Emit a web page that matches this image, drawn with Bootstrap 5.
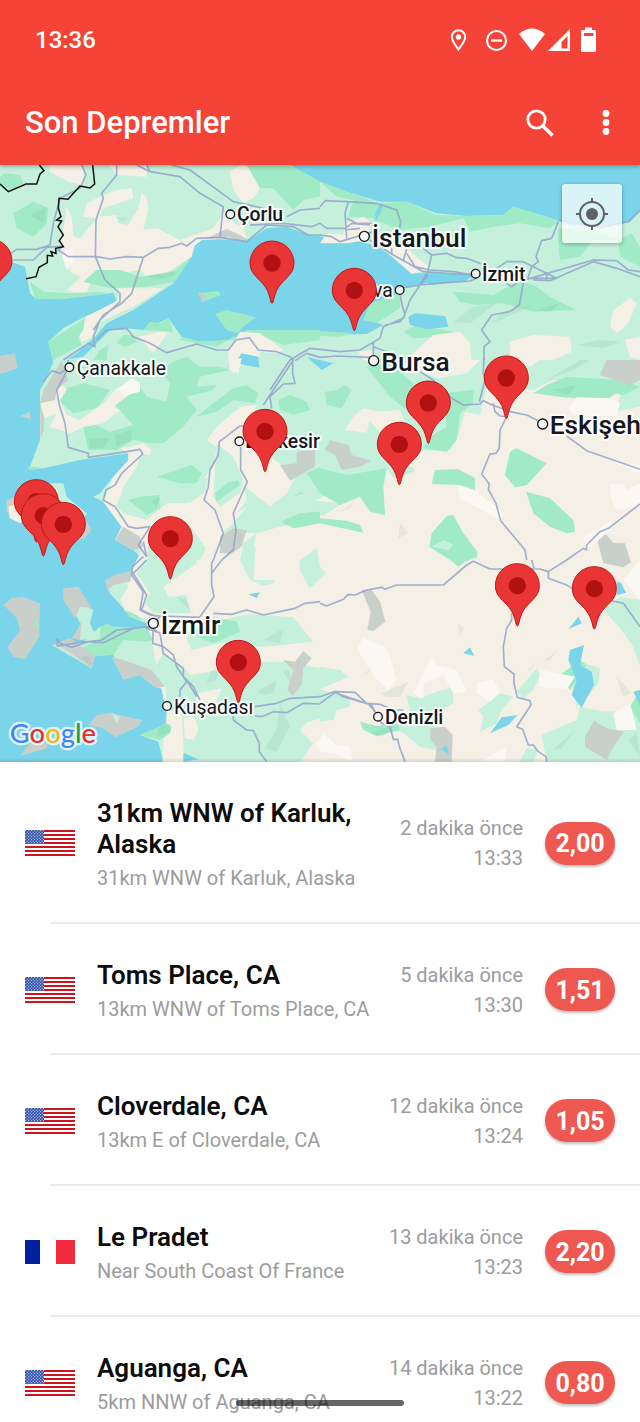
<!DOCTYPE html>
<html lang="tr">
<head>
<meta charset="utf-8">
<meta name="viewport" content="width=device-width, initial-scale=1">
<title>Son Depremler</title>
<link href="https://cdn.jsdelivr.net/npm/bootstrap@5.3.0/dist/css/bootstrap.min.css" rel="stylesheet">
<style>
  body { font-family: Roboto, "Noto Sans", sans-serif; color: #0c0c0c; }
  .app { height: 100vh; }
  .app-top { background: #f54337; color: #fff; box-shadow: 0 1px 5px rgba(0,0,0,.35); z-index: 2; }
  .status { height: 80px; padding: 0 44px 0 35px; font-size: 24px; font-weight: 500; }
  .toolbar { height: 85px; padding: 0 18px 0 25px; }
  .toolbar h1 { font-size: 31px; line-height: 36px; font-weight: 500; }
  .tools { gap: 34px; }
  .tool { width: 32px; height: 48px; border: 0; background: none; padding: 0; color: #fff; }
  .locate { top: 19px; right: 18px; width: 60px; height: 59px; border: 0; border-radius: 3px; background: rgba(255,255,255,.72); box-shadow: 0 1px 4px rgba(0,0,0,.3); padding: 0; }
  .sea { fill: #7bd5ea; } .land { fill: #c5f1dc; } .wood { fill: #a0eac5; }
  .plain { fill: #f5f0e5; } .pale { fill: #fbf8f3; } .rock { fill: #c9cfca; }
  .shade { fill: #4d8f78; fill-opacity: .1; }
  .road { fill: none; stroke: #92a3cb; stroke-width: 5; stroke-opacity: .85; stroke-linejoin: round; }
  .frontier { fill: none; stroke: #111; stroke-width: 4.5; }
  .place text { fill: #15171c; stroke: #fff; stroke-opacity: .85; stroke-width: 12; stroke-linejoin: round; paint-order: stroke; font-size: 58px; }
  .place .mid { font-weight: 500; }
  .place .big { font-weight: 500; font-size: 79px; }
  .place circle { fill: #f4f4f4; stroke: #15171c; stroke-width: 4; }
  .brand text { font-family: Lato, sans-serif; font-size: 82px; font-weight: 500; stroke: #fff; stroke-opacity: .75; stroke-width: 14; stroke-linejoin: round; paint-order: stroke; }
  .quake { padding: 0 25px; }
  .quake::after { content: ""; position: absolute; left: 50px; right: 0; bottom: 0; height: 2px; background: #ebebeb; }
  .flag { width: 50px; margin-right: 22px; }
  .info { padding: 36px 0 33px; min-width: 0; }
  .info h2 { font-size: 26px; line-height: 31px; font-weight: 600; margin: 0 0 5px; }
  .info p, .when { font-size: 20px; color: #9c9c9c; }
  .info p { line-height: 26px; margin: 0; }
  .when { line-height: 30px; margin: 0 22px 0 16px; }
  .magnitude { width: 70px; height: 43px; padding-top: 2px; border-radius: 22px; background: #ef5850; color: #fff; font-size: 25px; font-weight: 700; box-shadow: 0 2px 3px rgba(0,0,0,.25); }
  .home-bar { left: 50%; bottom: 16px; width: 168px; height: 6px; margin-left: -84px; border-radius: 3px; background: rgba(0,0,0,.6); z-index: 3; }
</style>
</head>
<body>
<div class="app d-flex flex-column overflow-hidden bg-white">
  <header class="app-top position-relative flex-shrink-0">
    <div class="status d-flex align-items-center justify-content-between">
      <span>13:36</span>
      <svg width="145" height="26" viewBox="451 26 145 26" fill="none" stroke="#fff" aria-hidden="true">
        <path d="M458.500 48.500C455 43.500 451.800 40 451.800 36a6.700 6.700 0 0 1 13.400 0C465.200 40 462 43.500 458.500 48.500Z" stroke-width="2"/>
        <circle cx="458.500" cy="36" r="2.700" fill="#fff" stroke="none"/>
        <circle cx="496.500" cy="39.500" r="9.500" stroke-width="2"/><path d="M491 39.500h11" stroke-width="2.400"/>
        <path d="M519 33Q532 22 545 33L532 50Z" fill="#fff" stroke="none"/>
        <path fill-rule="evenodd" d="M570 28V50H548ZM567.500 35L561.500 41V47.500h6Z" fill="#fff" stroke="none"/>
        <path fill-rule="evenodd" d="M585 29v-2.500h7V29h2.500q1.500 0 1.500 1.500v19q0 1.500-1.500 1.500h-12q-1.500 0-1.500-1.500v-19q0-1.500 1.500-1.500ZM584 32v3h9.500v-3Z" fill="#fff" stroke="none"/>
      </svg>
    </div>
    <div class="toolbar d-flex align-items-center">
      <h1 class="m-0 flex-grow-1">Son Depremler</h1>
      <div class="tools d-flex">
        <button class="tool" type="button" aria-label="Ara"><svg width="32" height="34" viewBox="0 0 32 34" fill="none" stroke="#fff"><circle cx="12.500" cy="13.500" r="8.700" stroke-width="2.800"/><path d="M19 20L28.500 29.500" stroke-width="3.600"/></svg></button>
        <button class="tool" type="button" aria-label="Menü"><svg width="32" height="32" viewBox="0 0 32 32" fill="#fff"><circle cx="16" cy="6.500" r="3.400"/><circle cx="16" cy="15.500" r="3.400"/><circle cx="16" cy="24.500" r="3.400"/></svg></button>
      </div>
    </div>
  </header>

  <section class="position-relative flex-shrink-0" aria-label="Harita">
    <svg class="map d-block w-100" viewBox="0 0 1920 1791">
      <defs>
        <g id="pin"><path d="M0 121C-5 121-5 96-18 75C-35 46-66 36-66 0A66 66 0 1 1 66 0C66 36 35 46 18 75C5 96 5 121 0 121Z" fill="#e93535" stroke="#c11717" stroke-width="3"/><circle r="26" fill="#b11211"/></g>
        <linearGradient id="fade" x2="0" y2="1"><stop offset="0" stop-opacity="0"/><stop offset="1" stop-opacity=".12"/></linearGradient>
      </defs>
      <rect class="sea" width="1920" height="1791"/>

      <!-- Thrace, Anatolia and the Black Sea coast -->
      <path class="land" d="M0 0H870L960 50L1040 80L1140 110L1220 110L1310 145L1400 153L1510 150L1540 125L1640 155L1710 180L1790 185L1890 170L1920 140V1791H490L475 1730L420 1710L510 1675L500 1625V1575L465 1565L420 1530L370 1540L340 1470L285 1470L275 1510L155 1440L250 1430L300 1385L440 1390L440 1375L390 1355L375 1335L330 1285L320 1245L400 1220L430 1185L400 1155L345 1125L365 1085L310 1010L280 995L300 985L340 935L385 895V865L240 885L130 910L90 905L120 825V675L140 640L190 585L250 575L300 525L330 495L380 490L430 495L505 460L545 515L600 530L700 525L730 505L840 495H960V510L1100 507L1150 480L1110 465L1195 385L1200 370L1280 355L1410 340L1440 330L1300 325L1245 325L1170 270L1130 243L1060 225L1010 233L960 213L930 210L860 185L800 190L770 210L735 230L700 215L605 225L585 240L575 275L540 305L520 355L400 435L320 475L285 515L230 565L190 590L135 650L160 590L145 530L190 490L245 460L352 410L340 383L180 403L105 400L90 385L75 305L30 290L0 270Z"/>

      <!-- Aegean inland -->
      <g transform="translate(360 945)">
        <path class="plain" d="M70 200L30 280L5 350L15 395L80 410L110 560L140 700L128 846H1560V0H700L410 160H300L180 100Z"/>
        <path class="land" d="M150 140L215 145L258 205L230 250L130 320L145 350L200 345L210 400L100 400L75 370L90 340L50 280L80 230L75 190ZM410 160L400 200L455 205L478 235L450 260L470 280L460 310L430 318L390 300L360 240L370 190ZM535 235L590 205L600 260L618 280L570 325L560 290L538 270ZM345 410L380 403L520 412L580 485L440 500L370 500L300 490L215 510L200 480L210 450ZM0 490L80 485L75 520L105 560L130 520L190 560L210 585L300 570L370 545L500 545L630 570L660 570L682 592L600 628L640 640L690 655V680L650 690L640 720L560 730L540 750L580 790L540 846H190V780L185 700L140 690L138 620L60 580L0 545Z"/>
        <path class="land" d="M410 160L430 120L560 60L660 70L630 110L560 100L480 150Z"/>
        <path class="plain" d="M230 640L305 625L290 665L225 665ZM190 715L225 710L235 750L222 780L195 775ZM130 775L190 790V846H128Z"/>
        <path class="sea" d="M190 818L235 838L190 846Z"/>
      </g>

      <g transform="translate(0 -15)">
        <path class="plain" d="M145 15H250V75L205 65L150 35ZM325 15H440V50L350 45ZM690 35L720 15H755L780 85L760 115L730 130L700 90ZM200 140L215 170L220 230L240 235L290 175L250 170L260 130L300 110L350 90L395 85L400 115L310 145L300 170L350 165L355 190L385 195L415 145L425 100L440 110L445 150L430 210L470 205L540 240L640 205L680 145L700 190L730 200L740 240L660 238L605 240L580 260L575 290L480 350L440 350L420 330L370 340L350 330L280 340L260 400L245 405L200 390L245 350L215 340L175 260L190 210ZM355 385H490L400 440L300 485L280 530L245 545L235 515L260 470L355 420ZM415 530L480 515L505 518L460 580Z"/>
        <path class="wood" d="M15 40L60 45L70 70L35 90L0 75V50ZM740 15H870L960 65V110L910 120L880 150L820 85L780 85ZM40 160L100 125L145 145L140 190L100 230L50 205ZM250 365L290 330L360 330L420 350L520 335L575 290L525 365L440 380L330 385ZM75 320L90 365L130 395L210 400L300 395L360 405L345 400L180 418L105 415ZM255 475L250 510L235 530L245 555L160 600L145 545ZM430 510L450 485L480 490L505 475L520 515ZM545 530L600 545L700 540L740 510L960 510V540L850 555L780 525L700 530L650 560L540 540ZM350 550L370 525L400 525L410 545L375 560ZM300 570L325 555L320 600H280Z"/>
        <path class="wood" d="M645 462L680 450L768 472L730 500L712 520L680 510ZM605 398L655 393L663 405L610 425Z"/>
        <path class="plain" d="M685 570L720 515L780 520L850 570L830 580L780 575L775 600L740 600L700 642L685 600Z"/>
        <path class="rock" d="M595 395L610 400L620 422L605 427ZM620 235L680 207L720 225L745 240L720 247L690 232ZM0 588L45 580L52 625L10 640H0Z"/>
        <path class="sea" d="M705 610L725 580L775 590L778 623Z"/>
        <path class="pale" d="M185 285L215 262L222 300L200 330Z"/>
        <path class="shade" d="M440 350L525 330V345L480 358ZM90 165L140 140L130 190ZM345 170L365 185L385 175Z"/>
        <path class="road" d="M245 15L258 45L240 85L180 115L160 190L150 255L110 268L50 268L0 300M40 300L100 300L140 262L190 258L175 270L205 290L290 290L330 297L380 290L430 292L475 265L510 262L545 250L560 258L590 235L660 232L740 245L800 195L880 200L925 225L960 225M350 15V45L305 100L310 115L288 180L286 290L315 360L360 400V425L300 480L280 530L285 560L265 550L190 600M430 292L395 400L365 430L310 465L280 510M410 15L450 35L540 50L600 100L670 140L660 230M440 15L450 35M515 15L570 30L700 125L790 145M750 195L850 190L935 200L960 190M860 170L900 150L960 145M290 540L320 510L380 505L400 530L450 550L500 578L590 552L650 570L685 570L708 540L748 533L775 570L830 575L870 590L880 600"/>
        <path class="frontier" d="M0 72L25 95L78 72H110L120 42L132 32L118 15M278 15L284 72L270 84L240 78L204 118L177 115L175 145L183 170L170 180L185 183L174 200L190 225L178 242L190 260L167 265L168 280L153 275L158 288L142 286V308L117 322L108 350L78 356"/>
      </g>

      <g transform="translate(960 -15)">
        <path class="wood" d="M0 65L80 95L150 120L180 135L165 175L85 170L100 120L50 110ZM180 130L260 125L350 165L440 168L550 165L580 140L680 170L715 185L690 205L600 190L520 200L450 215L430 175L330 200L240 210L190 190L160 180ZM715 205L820 215L900 240L820 240L780 290L720 300L715 250ZM400 395L520 405L600 360L650 380L690 410L770 450L640 455L550 430L470 435L420 425ZM150 430L240 400V445L170 490L130 480ZM250 515L290 495L400 515L390 530L280 535ZM895 240L935 220L960 260V320L900 290ZM-40 510L100 520L60 530L0 528Z"/>
        <path class="plain" d="M75 190L130 170L155 190L140 240L80 250L0 250L20 220L70 225ZM180 250L260 265L300 300L335 325L275 342L210 285ZM290 570L340 525L420 515L450 550L455 600L480 600L440 640L355 655L300 635L270 590ZM570 545L640 525L750 530L755 575L700 600H570ZM870 500L880 450L930 415L950 430L925 490L890 520ZM915 540L960 530V600L930 590ZM115 575L160 570L170 605L130 600Z"/>
        <path class="sea" d="M265 470L285 460L375 468L385 500L320 508L270 495ZM165 160L180 135L188 142L168 185ZM290 350L340 340L450 350L440 362L330 374Z"/>
        <path class="shade" d="M400 485L460 440L530 430L450 490ZM510 490L560 450L640 435L540 480ZM650 450L720 430L690 455ZM770 555L840 540L900 545L850 565ZM360 240L400 210L420 235Z"/>
        <path class="road" d="M0 140L15 122L80 125L170 130L230 150L242 185L238 210M85 125L75 160L80 235M0 190L20 205H75L95 190L150 195M80 175L110 190H155M0 225L35 230L60 245L160 215M75 210L120 205M215 265V285M150 240L220 285L310 335L450 345M260 268L250 300M260 280L285 320L330 330L400 335L460 345M310 265L335 285L380 280L410 293L440 295L485 312M335 285L320 350L300 375L270 420L250 475L190 500L180 535L120 570L60 575L-30 565L-90 600L-150 690M320 340L300 375L238 385L245 430L255 465L240 485L195 495M300 375L380 368L450 363L470 355M160 545V600M160 560L200 575L240 590M150 592L50 588L0 592L-40 580L-75 602M715 185L695 235L665 242L648 290L655 305L635 320L625 350L610 370L598 435L570 455L515 465L485 510L510 545L492 560V600M530 325L560 305L610 305L640 320L710 355L620 355M640 360L690 362L820 305L890 325L960 350M620 358L820 300L890 302L925 330L960 335M680 340V360M560 370L575 380L590 370M715 180L840 202L925 185L960 150"/>
      </g>

      <g transform="translate(0 585)">
        <path class="wood" d="M180 125L200 85L250 70L330 90L290 145L220 160ZM240 20L300 15L325 30L300 40ZM340 130L420 80L440 110L500 125L510 70L480 30L520 5L560 -10L600 20L660 20L690 30L600 50L590 80L650 75L640 90L560 110L590 150L550 200L490 250H450L400 240L350 270H265L250 200L290 195L330 215L400 195ZM700 85L740 75L775 100L765 130L700 120L650 155L590 170L640 130ZM835 120L870 105L920 125L930 150L880 165L840 150ZM470 350L575 315L605 340L590 370L540 370ZM845 485L900 460L960 455V490L880 505ZM920 340L960 320V370ZM80 320L130 325L90 330Z"/>
        <path class="plain" d="M120 180L125 100L190 75L200 90L180 120L200 165L240 180L310 130L350 85L400 95L340 140L360 150L310 190L250 200L210 220L150 200L170 160ZM685 -5H725L715 40L690 30ZM620 240L650 200L720 140L770 135L745 200L790 280L840 310L880 360L860 400L810 440L760 400L735 380L740 420L710 460L740 440L690 500L650 530L670 610H590L560 430L600 370L640 320L650 260ZM390 260L430 250L455 270L450 285L425 280L410 320L390 350L370 380L350 440L370 460L440 480L500 430L590 430L650 490L680 530L660 605H600L560 520H490L450 600H430L420 560L345 540L365 500L310 425L340 350L385 300V280L360 265Z"/>
        <path class="wood" d="M385 420L420 410L480 405L470 450L440 465ZM845 485L900 460L960 455V490L880 505Z"/>
        <path class="land" d="M540 400L600 360L625 350L615 395L570 430ZM650 250L700 290L730 360L720 400L660 440L640 410ZM510 500L575 505L618 565L600 600H440L450 520Z"/>
        <path class="wood" d="M645 400L680 370L715 360L720 375L650 425Z"/>
        <path class="rock" d="M150 60L185 0L205 60L170 90L165 120L120 130L130 90ZM120 130L132 170V210L122 235ZM60 168L90 155L92 178ZM840 315L890 310V275L945 270V320L870 362ZM660 530L700 505L740 510L725 560L695 580L660 580ZM345 540L370 500L420 530L430 560L400 572ZM20 420L50 410L60 450L30 475L20 450ZM240 450L275 510L250 540L225 520Z"/>
        <path class="land" d="M60 400L90 370L190 370L200 410L260 460L240 500L150 540L80 490Z"/>
        <path class="plain" d="M25 440L50 430L80 470L60 490L30 475Z"/>
        <path class="pale" d="M355 85L395 55L420 70L420 95L370 108Z"/>
        <path class="shade" d="M265 235L330 235L310 265L270 265ZM345 225L395 210V240L350 260ZM880 410L900 395L915 400ZM455 425L480 410L480 450Z"/>
        <path class="road" d="M205 0V25L170 90L178 135L195 190L205 262L265 280V292L380 275L420 268L428 282L365 340L345 375L318 390L310 420L345 440L385 500L410 505L450 500L415 555L440 590M130 65L155 32L180 40L205 25M880 0L790 135M878 0V40L885 70L850 72L810 110L815 145M740 200L720 198L658 245L655 285L630 330L625 380L612 420L645 450L670 520L640 600M722 260V330L742 365L700 460L708 510L700 570L665 600M430 545L440 590"/>
      </g>

      <g transform="translate(960 585)">
        <path class="plain" d="M640 90L700 60L860 60L960 120V660H-200L-190 520L-120 500L0 475L60 435L120 410L150 455L195 465L190 380L200 330L310 272L390 270L415 225L435 155L480 165L500 80ZM75 210L100 170L130 145L180 155L240 150L260 200L180 215L150 185L140 218ZM590 0L630 20L660 0Z"/>
        <path class="wood" d="M15 95L50 90L75 75L95 90L65 145L20 135ZM140 20L210 10L280 70L260 150L210 110ZM370 100L460 90V130L420 160L410 240L380 275L310 265L330 230L380 200ZM640 100L680 75L740 50L900 60L960 80V130L890 100L850 125L720 110ZM-40 340L0 325L80 345L200 325L190 380L195 465L150 455L120 410L60 435L0 400ZM-115 485L-60 460L0 475L80 482L120 495L130 518L0 490L-80 505ZM345 330L415 327L465 355V390L420 375L335 372ZM570 275L590 265L680 310L620 375L585 382L555 345ZM618 395L690 415L760 480L765 515L740 520L690 500L640 460ZM380 468L400 465L430 520L472 575V590L435 605L415 620L390 600L328 560L335 520Z"/>
        <path class="land" d="M200 325L280 320L285 335L220 355ZM885 155L900 110L960 80V140ZM335 560L370 540L400 555L385 570ZM-60 600L-10 565L0 620L18 640L-30 685L-62 630Z"/>
        <path class="rock" d="M15 270L30 240L85 255L95 285L155 302L120 320L65 330L45 285ZM840 45L860 0H960V60L930 75ZM832 540L855 520L880 548L915 550L930 600L935 605L910 622L850 610Z"/>
        <path class="pale" d="M745 145L770 112L870 115L900 130L890 170L760 165ZM410 375L470 395L550 460L540 480L420 415ZM870 375L910 370L920 390L960 370V440L890 450L875 420ZM875 305L960 315V340ZM790 530L880 480L860 520L800 570Z"/>
        <path class="sea" d="M-40 -10L40 10L5 30Z"/>
        <path class="shade" d="M60 455L105 425L90 445ZM240 490L265 520L235 535ZM680 60L780 0H810L760 30ZM700 90L770 75L745 105Z"/>
        <path class="road" d="M492 -5L490 40L495 60L478 125M300 35L340 60L395 115L430 135L480 132L490 122L510 132L570 155L620 165L670 190M520 130L525 155L540 168L560 170L540 210L538 265L528 280L510 282L485 342L508 372L505 388L528 430L542 482L615 570L620 600M740 228L800 272L960 328M960 432L865 505L840 515L800 555V570L790 565L740 600"/>
      </g>

      <g transform="translate(0 1185)">
        <path class="plain" d="M400 60L365 80L360 120L390 165L450 180L420 150L440 105ZM915 490L960 475V520L910 525Z"/>
        <path class="land" d="M225 145L250 135L280 150L270 190L290 235L240 240L240 190L228 165Z"/>
        <path class="wood" d="M600 210L640 170L710 185L720 215L640 250L590 230ZM300 205L320 190L350 205L440 205L460 240L440 245L370 240L340 285L275 290L245 265L300 240ZM375 150L410 165L430 180L390 172ZM420 525L500 490L515 500L510 520L480 540Z"/>
        <path class="rock" d="M10 135L35 115L70 110L120 130L118 230L75 297L40 290L22 262L60 210L50 175ZM190 85L235 80L275 145L240 140L225 175L190 120ZM245 180L240 240L215 235L235 205ZM155 255L210 235L285 290L275 325L190 265ZM335 290L370 300L455 330L495 380L465 383L420 345L370 360ZM265 495L290 465L330 458L425 480L415 500L345 532L310 505ZM60 588L90 550L145 550L140 565ZM315 60L345 45L400 30L390 65L340 75L325 98ZM848 300L885 305L910 272L935 295L910 325L905 375L878 408L862 390L880 330Z"/>
        <path class="land" d="M335 460L360 470L350 490ZM325 85L380 65L385 80L360 120L335 100Z"/>
        <path class="wood" d="M100 190L115 172V208Z"/>
        <path class="sea" d="M745 103L780 97L770 114Z"/>
        <path class="shade" d="M530 110L580 165L560 120ZM770 395L830 360L820 400L790 405ZM840 430L870 500L830 575L795 565L830 510ZM630 335L660 315L650 360L620 370ZM850 335L870 330V370ZM480 500L515 490L510 515L470 530ZM790 240L850 205L840 250ZM270 290L240 290L275 320Z"/>
        <path class="road" d="M440 0L400 40L440 105L425 150L470 170M430 -10L398 20L395 45L430 95L420 150L450 165L480 168L600 172M640 0L635 10V75L642 110L600 170M665 0L635 40M640 160L695 163L740 150L790 165L885 145L915 130L960 125M172 235L180 250L215 262L265 245L305 240L350 210L450 200L480 220M172 235L172 258L255 245L310 248L400 205L440 200L460 205L458 250L490 260L520 285L530 320L560 365L540 390V410M480 170L440 205L480 220L490 280L550 325V350L580 380L600 420M560 360L590 410M765 440L830 430L870 415L960 410M765 468L785 470L820 455L860 458L910 430L960 432M700 465V480L740 510L760 512L778 550V575L800 605"/>
      </g>

      <g transform="translate(960 1185)">
        <path class="land" d="M0 320L60 330L85 350L50 365L0 362ZM260 405L300 415L350 395L400 380L400 430L350 460L345 500L350 570L300 560L250 520L210 500L270 460ZM475 450L540 400L580 410L545 450L530 490L480 515L490 470ZM590 395L650 325L660 345L640 390L610 415ZM665 525L770 480L780 440L850 455L960 450V605H680ZM780 305L840 325L835 370L810 400L770 440L750 350ZM600 605L620 565L655 570L640 605ZM850 150L900 110L960 120V320L940 260L900 205Z"/>
        <path class="wood" d="M120 485L170 498L235 490L240 510L170 528L130 510ZM720 345L780 300L800 315L750 390ZM930 440L960 390V490Z"/>
        <path class="pale" d="M110 265L130 235L195 260L210 290L230 360L205 390L165 350ZM280 400L335 290L350 315L410 330L440 395L400 400L370 345L310 370L310 415ZM470 370L520 358L540 395L510 425L470 400ZM660 330L765 350L740 388L655 380ZM-10 550L10 522L50 555L90 560L97 605L40 580L0 575ZM880 460L930 430L950 510L890 510ZM480 605L560 560L555 605ZM910 60L960 0V120Z"/>
        <path class="rock" d="M125 90L155 90L180 125L196 185L160 213L142 210L152 155ZM330 505L375 500L398 525L395 605H345L350 560L332 540ZM795 530L822 482L860 505L912 515L880 560L860 600L795 560Z"/>
        <path class="sea" d="M430 280L450 262L462 287ZM745 208L775 170L785 190ZM745 300L750 270L792 255L780 315L815 335L822 375L785 443L755 405L770 360ZM510 520L545 472L593 465L565 495ZM362 565L380 557L388 585ZM890 65L903 68L918 98L890 105ZM940 395L960 390V435Z"/>
        <path class="shade" d="M415 190L430 205L418 225ZM130 345L160 318L140 345ZM185 400L265 365L240 410L200 412ZM620 335L660 290L630 330ZM670 305L710 272L690 300ZM700 570L765 510L725 565ZM925 540L950 515L960 590ZM890 350L935 400L910 410ZM150 520L230 490L190 530Z"/>
        <path class="road" d="M0 130L20 138L70 118L85 103L105 105L140 90L185 82L195 88L230 75H370L440 15L460 4L510 27H660L685 35L740 0M635 0L642 25M685 35V55L740 75L780 100L880 123L910 130L960 200M575 160V180L560 205L550 260L553 320L582 342V370L592 412L630 422L633 435L590 500L608 508L625 555H640L655 575L678 590L680 605M0 410L42 395L105 397L140 430L180 433L220 450L250 450M0 430L45 398L145 432L165 455L185 490L210 500L220 538H233L238 560L255 605M45 395L70 410L155 435L170 465"/>
      </g>

      <rect y="1779" width="1920" height="12" fill="url(#fade)"/>

      <g class="place">
        <circle cx="691" cy="148" r="13"/><text class="mid" x="711" y="169">Çorlu</text>
        <circle cx="1093" cy="214" r="15"/><text class="big" x="1115" y="246">İstanbul</text>
        <circle cx="1427" cy="326" r="13"/><text class="mid" x="1446" y="348">İzmit</text>
        <circle cx="1199" cy="375" r="13"/><text x="1178" y="397" text-anchor="end">Yalova</text>
        <circle cx="208" cy="607" r="13"/><text x="230" y="629">Çanakkale</text>
        <circle cx="1121" cy="587" r="15"/><text class="big" x="1144" y="619">Bursa</text>
        <circle cx="718" cy="829" r="13"/><text class="mid" x="736" y="850">Balıkesir</text>
        <circle cx="1628" cy="777" r="15"/><text class="big" x="1649" y="808">Eskişeh</text>
        <circle cx="460" cy="1375" r="15"/><text class="big" x="482" y="1406">İzmir</text>
        <circle cx="501" cy="1623" r="13"/><text x="522" y="1646">Kuşadası</text>
        <circle cx="1134" cy="1655" r="13"/><text class="mid" x="1155" y="1677">Denizli</text>
      </g>
      <g class="brand"><text x="29" y="1735"><tspan fill="#4285f4">G</tspan><tspan fill="#ea2d25">o</tspan><tspan fill="#fbb605">o</tspan><tspan fill="#4285f4">g</tspan><tspan fill="#20a04b">l</tspan><tspan fill="#ea2d25">e</tspan></text></g>
      <g>
        <use href="#pin" x="-30" y="288"/><use href="#pin" x="816" y="294"/><use href="#pin" x="1063" y="376"/>
        <use href="#pin" x="1519" y="639"/><use href="#pin" x="1285" y="714"/><use href="#pin" x="795" y="799"/><use href="#pin" x="1198" y="838"/>
        <use href="#pin" x="109" y="1010"/><use href="#pin" x="130" y="1052"/><use href="#pin" x="190" y="1078"/><use href="#pin" x="511" y="1121"/>
        <use href="#pin" x="1552" y="1262"/><use href="#pin" x="1783" y="1271"/><use href="#pin" x="715" y="1492"/>
      </g>
    </svg>
    <button class="locate position-absolute d-flex align-items-center justify-content-center" type="button" aria-label="Konumum">
      <svg width="34" height="34" viewBox="0 0 34 34" fill="none" stroke="#5f6163" stroke-width="2"><circle cx="17" cy="17" r="12"/><circle cx="17" cy="17" r="6" fill="#5f6163" stroke="none"/><path d="M17 1v4M17 29v4M1 17h4M29 17h4"/></svg>
    </button>
  </section>

  <svg class="position-absolute" width="0" height="0" aria-hidden="true">
    <defs>
      <pattern id="stars" width="3" height="3" patternUnits="userSpaceOnUse"><rect width="3" height="3" fill="#2f4fa8"/><circle cx=".7" cy=".7" r=".6" fill="#d5def5"/><circle cx="2.200" cy="2.200" r=".6" fill="#d5def5"/></pattern>
    </defs>
    <symbol id="us" viewBox="0 0 50 26"><rect width="50" height="26" fill="#fff"/><path d="M0 1H50M0 5H50M0 9H50M0 13H50M0 17H50M0 21H50M0 25H50" stroke="#cf1420" stroke-width="2"/><rect width="19" height="14" fill="url(#stars)"/></symbol>
    <symbol id="fr" viewBox="0 0 50 26"><path d="M0 1H15V25H0Z" fill="#00209f"/><path d="M31 1H50V25H31Z" fill="#f12b3b"/></symbol>
  </svg>

  <main class="flex-grow-1 overflow-hidden">
    <ul class="list-unstyled m-0">
      <li class="quake position-relative d-flex align-items-center">
        <svg class="flag flex-shrink-0" height="26" role="img" aria-label="ABD"><use href="#us"/></svg>
        <div class="info flex-fill"><h2>31km WNW of Karluk, Alaska</h2><p>31km WNW of Karluk, Alaska</p></div>
        <div class="when text-end text-nowrap">2 dakika önce<br>13:33</div>
        <span class="magnitude flex-shrink-0 d-flex align-items-center justify-content-center">2,00</span>
      </li>
      <li class="quake position-relative d-flex align-items-center">
        <svg class="flag flex-shrink-0" height="26" role="img" aria-label="ABD"><use href="#us"/></svg>
        <div class="info flex-fill"><h2>Toms Place, CA</h2><p>13km WNW of Toms Place, CA</p></div>
        <div class="when text-end text-nowrap">5 dakika önce<br>13:30</div>
        <span class="magnitude flex-shrink-0 d-flex align-items-center justify-content-center">1,51</span>
      </li>
      <li class="quake position-relative d-flex align-items-center">
        <svg class="flag flex-shrink-0" height="26" role="img" aria-label="ABD"><use href="#us"/></svg>
        <div class="info flex-fill"><h2>Cloverdale, CA</h2><p>13km E of Cloverdale, CA</p></div>
        <div class="when text-end text-nowrap">12 dakika önce<br>13:24</div>
        <span class="magnitude flex-shrink-0 d-flex align-items-center justify-content-center">1,05</span>
      </li>
      <li class="quake position-relative d-flex align-items-center">
        <svg class="flag flex-shrink-0" height="26" role="img" aria-label="Fransa"><use href="#fr"/></svg>
        <div class="info flex-fill"><h2>Le Pradet</h2><p>Near South Coast Of France</p></div>
        <div class="when text-end text-nowrap">13 dakika önce<br>13:23</div>
        <span class="magnitude flex-shrink-0 d-flex align-items-center justify-content-center">2,20</span>
      </li>
      <li class="quake position-relative d-flex align-items-center">
        <svg class="flag flex-shrink-0" height="26" role="img" aria-label="ABD"><use href="#us"/></svg>
        <div class="info flex-fill"><h2>Aguanga, CA</h2><p>5km NNW of Aguanga, CA</p></div>
        <div class="when text-end text-nowrap">14 dakika önce<br>13:22</div>
        <span class="magnitude flex-shrink-0 d-flex align-items-center justify-content-center">0,80</span>
      </li>
    </ul>
  </main>
  <div class="home-bar position-fixed"></div>
</div>
<script src="https://cdn.jsdelivr.net/npm/bootstrap@5.3.0/dist/js/bootstrap.bundle.min.js"></script>
</body>
</html>
